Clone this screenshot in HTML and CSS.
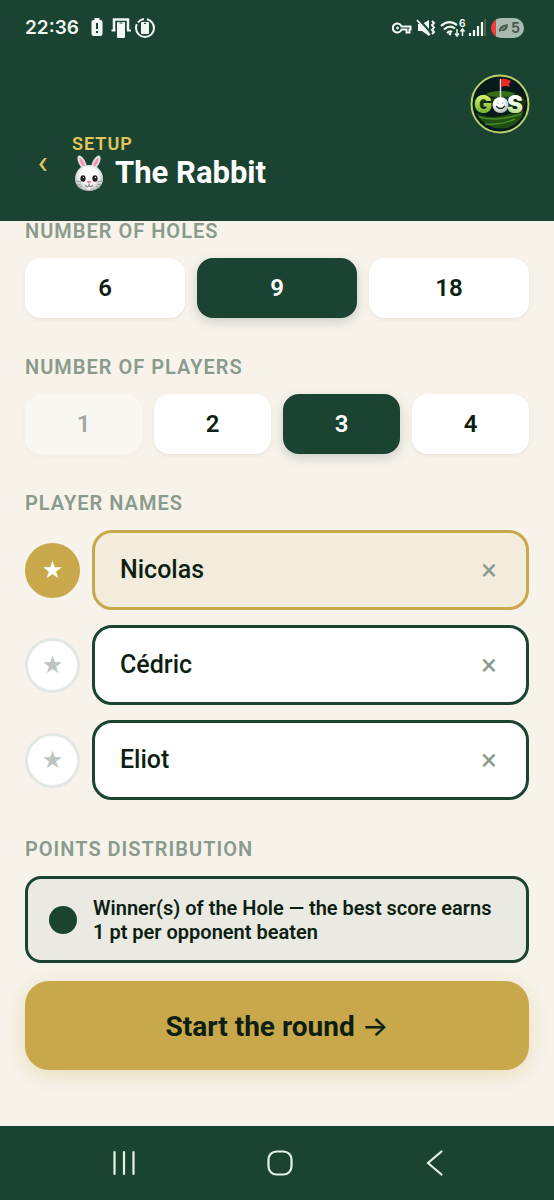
FILE: index.html
```html
<!DOCTYPE html>
<html lang="en">
<head>
    <meta charset="UTF-8">
    <meta name="viewport" content="width=device-width, initial-scale=1">
    <title>The Rabbit - Setup</title>
    <link rel="stylesheet" href="styles.css">
</head>
<body>
    <header class="top">
        <div class="status">
            <span class="time">22:36</span>
            <svg class="icons-left" width="66" height="22" viewBox="0 0 66 22" fill="none">
                <path d="M3.500 3h1V1h5v2h1q2 0 2 2v12q0 2-2 2h-7q-2 0-2-2V5q0-2 2-2z" fill="#f1f8f1"/>
                <path d="M7 6v6M7 14v2" stroke="#1b4332" stroke-width="2"/>
                <path d="M24 13V2.500h14V13" stroke="#f1f8f1" stroke-width="2.500"/>
                <path d="M21.500 13.500h4M37 13.500h4" stroke="#f1f8f1" stroke-width="2"/>
                <rect x="27" y="5" width="8" height="16" rx="1" fill="#f1f8f1"/>
                <path d="M29.500 6h3" stroke="#1b4332"/>
                <circle cx="55" cy="11" r="9" stroke="#f1f8f1" stroke-width="2" stroke-dasharray="32 2 7 3 13 0"/>
                <rect x="51" y="5" width="8" height="12" rx="1" fill="#f1f8f1"/>
                <path d="M54 6.500h2" stroke="#1b4332"/>
            </svg>
            <svg class="icons-right" width="94" height="22" viewBox="0 0 94 22" fill="none">
                <g stroke="#f1f8f1" stroke-width="2">
                    <path d="M9.500 9.500a4.500 4.500 0 1 0 0 3h5v3h3v-3h1V9.500z"/>
                    <circle cx="5.500" cy="11" r="1" fill="#f1f8f1" stroke-width="1"/>
                    <path d="M26 7h4l7-4v16l-7-5h-4z" fill="#f1f8f1" stroke="none"/>
                    <path d="M26 1l13 15" stroke="#1b4332" stroke-width="2"/>
                    <path d="M25 3l13 15" stroke-width="1.800"/>
                    <path d="M40 4l2 2-2 2 2 2.500-2 2.500 2 2-2 2"/>
                    <path d="M49 9q8-7 16-1M52 12.500q6-5 11-1M55 16q3-2.500 5-1" stroke-width="2.200"/>
                    <circle cx="58" cy="17" r="1.400" fill="#f1f8f1" stroke="none"/>
                    <path d="M65 12v7M63 16.500l2 2.500 2-2.500M70.500 19v-7M68.500 14.500l2-2.500 2 2.500" stroke-width="1.500"/>
                    <path d="M78 19v-3M82 19v-6M86 19V9M90 19V5" stroke-width="2.200"/>
                </g>
                <path d="M93 19V2" stroke="#6d8577"/>
                <text class="wifi-gen" x="67" y="10" fill="#f1f8f1">6</text>
            </svg>
            <span class="battery">
                <svg width="11" height="10" viewBox="0 0 11 10"><path d="M1 9Q0 2 10 1q0 8-7 7z" fill="#4b5b52"/><path d="M3 7l4-3" stroke="#a9bab0"/></svg>
                5
            </span>
        </div>
        <div class="heading">
            <button class="back" type="button" aria-label="Back">‹</button>
            <div class="titles">
                <div class="step">SETUP</div>
                <h1>
                    <svg class="rabbit" width="34" height="38" viewBox="0 0 34 38">
                        <defs>
                            <radialGradient id="fur" cx=".5" cy=".4" r=".6">
                                <stop offset=".5" stop-color="#fafafa"/>
                                <stop offset="1" stop-color="#b9babd"/>
                            </radialGradient>
                        </defs>
                        <path d="M12 16C5 10 4 2 7 1.500S15 8 15 15z" fill="#e2e2e4"/>
                        <path d="M22 16c7-6 8-14 5-14.500S19 8 19 15z" fill="#e2e2e4"/>
                        <path d="M12 14C7 8 7 4 8 4s5 5 5 9z" fill="#f591ad"/>
                        <path d="M22 14c5-6 5-10 4-10s-5 5-5 9z" fill="#f591ad"/>
                        <path d="M17 11c8 0 14 6 14 14 0 7-6 12-14 12S3 32 3 25c0-8 6-14 14-14z" fill="url(#fur)"/>
                        <ellipse cx="11" cy="24.500" rx="2.600" ry="3.200" fill="#241f1f"/>
                        <ellipse cx="23" cy="24.500" rx="2.600" ry="3.200" fill="#241f1f"/>
                        <circle cx="11.500" cy="23.500" r=".7" fill="#fff"/>
                        <circle cx="23.500" cy="23.500" r=".7" fill="#fff"/>
                        <path d="M14.500 27.500q2.500-1.500 5 0L17 30z" fill="#ee8295"/>
                        <path d="M17 30v2M13 31q2 3 4 1q2 2 4-1" fill="none" stroke="#777"/>
                        <path d="M15.500 33h3v2.500h-3z" fill="#fff"/>
                        <path d="M4 27l5 1M4 31l5-1M6 34l4-2M30 27l-5 1M30 31l-5-1M28 34l-4-2" stroke="#85868a" stroke-width=".7"/>
                    </svg>
                    The Rabbit
                </h1>
            </div>
            <svg class="logo" width="60" height="60" viewBox="0 0 60 60">
                <defs>
                    <linearGradient id="lime" x1="0" y1="0" x2="0" y2="1">
                        <stop offset=".2" stop-color="#d7ef6a"/>
                        <stop offset="1" stop-color="#4d9c1c"/>
                    </linearGradient>
                    <linearGradient id="silver" x1="0" y1="0" x2="0" y2="1">
                        <stop offset=".4" stop-color="#fff"/>
                        <stop offset="1" stop-color="#8fc740"/>
                    </linearGradient>
                    <radialGradient id="ball" cx=".4" cy=".35" r=".7">
                        <stop offset=".4" stop-color="#fff"/>
                        <stop offset="1" stop-color="#aab2b0"/>
                    </radialGradient>
                </defs>
                <circle cx="30" cy="30" r="28.500" fill="#06191b" stroke="#b9d36b" stroke-width="2"/>
                <path d="M4 27q8-8 17-8h20q9 0 15 8l-2 6H6z" fill="#17370f"/>
                <ellipse cx="31" cy="20" rx="14" ry="3" fill="#356f17"/>
                <path d="M6 39q12 6 25 3t23-5q-3 13-17 17-21 3-31-15z" fill="#1f4f16"/>
                <path d="M9 43q18 5 42-3M15 50q17 1 30-5" fill="none" stroke="#4a8a22" stroke-width="1.500"/>
                <path d="M30.500 5v18" stroke="#d7ddd8" stroke-width="1.500"/>
                <path d="M31 5q5-1 10 2l-2 3 1 3q-5-2-9 0z" fill="#e72b26"/>
                <text class="logo-text" x="4" y="39" fill="url(#lime)" stroke="#07240b">G</text>
                <text class="logo-text" x="37" y="39" fill="url(#silver)" stroke="#07240b">S</text>
                <circle cx="30.500" cy="31" r="8" fill="url(#ball)"/>
                <path d="M26 32q4.500 5 9 0" fill="none" stroke="#27332c" stroke-width="1.400"/>
                <circle cx="28" cy="29" r=".6" fill="#7b837e"/>
                <circle cx="33" cy="29" r=".6" fill="#7b837e"/>
            </svg>
        </div>
    </header>

    <main class="setup">
        <section>
            <h2>NUMBER OF HOLES</h2>
            <div class="choices">
                <button class="choice" type="button">6</button>
                <button class="choice active" type="button">9</button>
                <button class="choice" type="button">18</button>
            </div>
        </section>
        <section>
            <h2>NUMBER OF PLAYERS</h2>
            <div class="choices">
                <button class="choice" type="button" disabled>1</button>
                <button class="choice" type="button">2</button>
                <button class="choice active" type="button">3</button>
                <button class="choice" type="button">4</button>
            </div>
        </section>
        <section>
            <h2>PLAYER NAMES</h2>
            <div class="players">
                <div class="player favorite">
                    <button class="star" type="button" aria-label="Favorite">★</button>
                    <div class="field">
                        <input type="text" value="Nicolas" aria-label="Player 1">
                        <button class="clear" type="button" aria-label="Clear">×</button>
                    </div>
                </div>
                <div class="player">
                    <button class="star" type="button" aria-label="Favorite">★</button>
                    <div class="field">
                        <input type="text" value="Cédric" aria-label="Player 2">
                        <button class="clear" type="button" aria-label="Clear">×</button>
                    </div>
                </div>
                <div class="player">
                    <button class="star" type="button" aria-label="Favorite">★</button>
                    <div class="field">
                        <input type="text" value="Eliot" aria-label="Player 3">
                        <button class="clear" type="button" aria-label="Clear">×</button>
                    </div>
                </div>
            </div>
        </section>
        <section>
            <h2>POINTS DISTRIBUTION</h2>
            <label class="rule">
                <input type="radio" name="points" checked>
                <span>Winner(s) of the Hole — the best score earns 1 pt per opponent beaten</span>
            </label>
            <button class="start" type="button">Start the round <span class="arrow">→</span></button>
        </section>
    </main>

    <nav class="system">
        <button type="button" aria-label="Recent apps">
            <svg width="28" height="28" viewBox="0 0 28 28"><path d="M4.500 3v22M14 3v22M23.500 3v22" stroke="#e3f3e6" stroke-width="2.200" stroke-linecap="round"/></svg>
        </button>
        <button type="button" aria-label="Home">
            <svg width="28" height="28" viewBox="0 0 28 28"><rect x="2.500" y="2.500" width="23" height="23" rx="8" fill="none" stroke="#e3f3e6" stroke-width="2.200"/></svg>
        </button>
        <button type="button" aria-label="Back">
            <svg width="28" height="28" viewBox="0 0 28 28"><path d="M20.500 2.500L7 14l13.500 11.500" fill="none" stroke="#e3f3e6" stroke-width="2.200" stroke-linecap="round"/></svg>
        </button>
    </nav>
</body>
</html>
```
FILE: styles.css
```css
* {
    box-sizing: border-box;
}
body {
    display: flex;
    flex-direction: column;
    min-height: 100vh;
    margin: 0;
    background: #f7f3eb;
    color: #0d1f12;
    font-family: Roboto, sans-serif;
}
button,
input {
    margin: 0;
    padding: 0;
    border: none;
    background: none;
    color: inherit;
    font-family: inherit;
}
button {
    cursor: pointer;
}
svg {
    display: block;
    flex: none;
}
h1,
h2 {
    margin: 0;
}

.top {
    background: #1b4332;
    color: white;
}
.status {
    display: flex;
    align-items: center;
    height: 56px;
    padding: 0 30px 0 25px;
    color: #f1f8f1;
}
.time {
    font: 600 19px/24px Inter, sans-serif;
}
.icons-left {
    margin-left: 11px;
}
.icons-right {
    margin-left: auto;
}
.wifi-gen {
    font: 700 10px Inter, sans-serif;
}
.battery {
    display: flex;
    align-items: center;
    justify-content: center;
    gap: 2px;
    width: 33px;
    height: 20px;
    margin-left: 5px;
    padding-left: 3px;
    border-radius: 10px;
    background: linear-gradient(to right, #ee4036 5px, #a9bab0 5px);
    color: #4b5b52;
    font: 700 14px/20px Inter, sans-serif;
}

.heading {
    display: flex;
    align-items: flex-end;
    padding: 18px 24px 29px 25px;
    gap: 12px;
}
.back {
    width: 35px;
    height: 60px;
    color: #e3c65b;
    font-size: 34px;
}
.titles {
    flex: 1;
}
.step {
    color: #e3c65b;
    font-size: 18px;
    font-weight: 600;
    line-height: 21px;
    letter-spacing: 1px;
}
h1 {
    display: flex;
    align-items: center;
    gap: 9px;
    height: 38px;
    font-size: 31px;
    font-weight: 700;
    line-height: 38px;
}
.logo {
    margin-bottom: 58px;
}
.logo-text {
    font: 900 24px Inter, sans-serif;
    paint-order: stroke;
}

.setup {
    display: flex;
    flex: 1;
    flex-direction: column;
    gap: 39px;
    padding: 0 25px 55px;
}
h2 {
    margin-bottom: 17px;
    color: #8a9a8c;
    font-size: 20px;
    font-weight: 600;
    line-height: 20px;
    letter-spacing: 1px;
}
.choices {
    display: flex;
    gap: 12px;
}
.choice {
    flex: 1;
    height: 60px;
    border-radius: 16px;
    background: white;
    box-shadow: 0 2px 4px rgba(0, 0, 0, .06);
    font-size: 24px;
    font-weight: 600;
}
.choice.active {
    background: #1b4332;
    box-shadow: 0 4px 12px rgba(27, 67, 50, .2);
    color: white;
}
.choice:disabled {
    opacity: .35;
}

.players {
    display: flex;
    flex-direction: column;
    gap: 15px;
}
.player {
    display: flex;
    align-items: center;
    gap: 12px;
}
.star {
    width: 55px;
    height: 55px;
    border: 3px solid #e2e8e3;
    border-radius: 50%;
    background: white;
    color: #bfc4c0;
    font-family: "DejaVu Sans", sans-serif;
    font-size: 24px;
}
.field {
    display: flex;
    flex: 1;
    align-items: center;
    height: 80px;
    padding: 0 20px 0 25px;
    border: 3px solid #1b4332;
    border-radius: 20px;
    background: white;
}
.field input {
    flex: 1;
    min-width: 0;
    font-size: 25px;
    font-weight: 500;
    line-height: 30px;
}
.clear {
    width: 34px;
    height: 34px;
    color: #8a9a8c;
    font-size: 29px;
    line-height: 34px;
}
.favorite .star {
    border-color: #c9a84c;
    background: #c9a84c;
    color: white;
}
.favorite .field {
    border-color: #c9a84c;
    background: #f3ecdc;
}

.rule {
    display: flex;
    align-items: center;
    gap: 16px;
    padding: 17px 22px 16px 21px;
    border: 3px solid #1b4332;
    border-radius: 16px;
    background: #eaeae2;
    font-size: 20px;
    font-weight: 600;
    line-height: 24px;
}
.rule input {
    flex: none;
    width: 28px;
    height: 28px;
    border-radius: 50%;
    background: #1b4332;
    appearance: none;
}
.start {
    width: 100%;
    height: 89px;
    margin-top: 18px;
    border-radius: 24px;
    background: #c9a84c;
    box-shadow: 0 5px 20px rgba(201, 168, 76, .3);
    font-size: 28px;
    font-weight: 700;
}
.arrow {
    font-family: Inter, sans-serif;
    font-weight: 500;
}

.system {
    display: flex;
    align-items: center;
    justify-content: space-between;
    height: 74px;
    padding: 0 105px 0 110px;
    background: #1b4332;
}
```
